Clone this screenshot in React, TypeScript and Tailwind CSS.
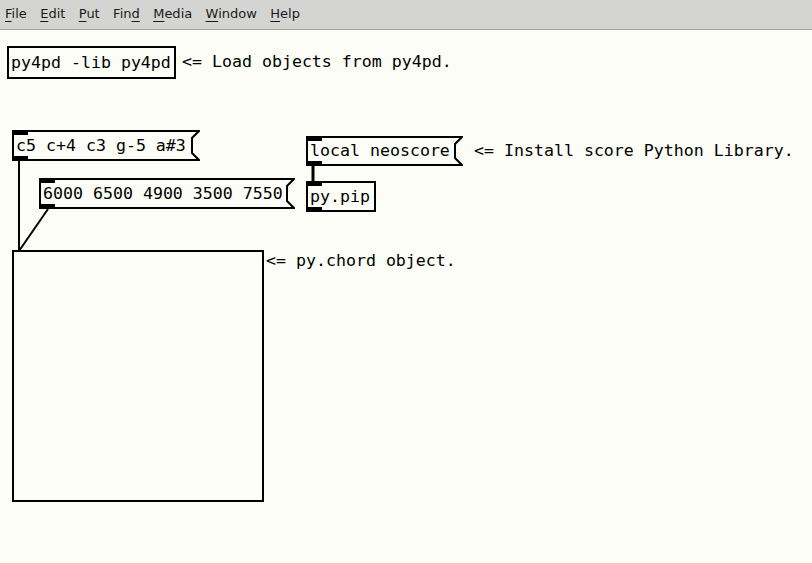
import React from "react";

const mono = { fontFamily: '"DejaVu Sans Mono", "Liberation Mono", monospace' };

function Inlets() {
  return (
    <>
      <div className="absolute left-0 top-0 h-[5px] w-[16px] bg-black" />
      <div className="absolute left-0 bottom-0 h-[5px] w-[16px] bg-black" />
    </>
  );
}

function Msg({ left, top, w, h, text }: { left: number; top: number; w: number; h: number; text: string }) {
  const pts = `1,1 ${w - 1},1 ${w - 8},8 ${w - 8},${h - 8} ${w - 1},${h - 1} 1,${h - 1}`;
  return (
    <div className="absolute" style={{ left, top, width: w, height: h }}>
      <svg className="absolute inset-0" width={w} height={h}>
        <polygon points={pts} fill="none" stroke="black" strokeWidth={2} strokeLinejoin="miter" />
      </svg>
      <Inlets />
      <div
        className="relative flex h-full items-center pl-[4px] pt-[1px] text-[16.6px] leading-none text-black whitespace-pre"
        style={mono}
      >
        {text}
      </div>
    </div>
  );
}

function Obj({ left, top, w, h, text, io = true }: { left: number; top: number; w: number; h: number; text: string; io?: boolean }) {
  return (
    <div
      className="absolute border-2 border-black"
      style={{ left, top, width: w, height: h }}
    >
      {io && (
        <>
          <div className="absolute left-[-2px] top-[-2px] h-[5px] w-[16px] bg-black" />
          <div className="absolute left-[-2px] bottom-[-2px] h-[5px] w-[16px] bg-black" />
        </>
      )}
      <div
        className="flex h-full items-center pl-[2px] pt-[1px] text-[16.6px] leading-none text-black whitespace-pre"
        style={mono}
      >
        {text}
      </div>
    </div>
  );
}

function Comment({ left, top, text }: { left: number; top: number; text: string }) {
  return (
    <div
      className="absolute h-[20px] text-[16.6px] leading-[20px] text-black whitespace-pre"
      style={{ left, top, ...mono }}
    >
      {text}
    </div>
  );
}

const menus: [string, string, string][] = [
  ["", "F", "ile"],
  ["", "E", "dit"],
  ["", "P", "ut"],
  ["Fin", "d", ""],
  ["", "M", "edia"],
  ["", "W", "indow"],
  ["", "H", "elp"],
];

export default function App() {
  return (
    <div className="flex h-[563px] w-[812px] flex-col overflow-hidden bg-[#fdfdf7]">
      <div
        className="flex h-[30px] shrink-0 items-center gap-[13.4px] border-b border-[#a4a49c] bg-[#d4d4d2] pb-[1px] pl-[5px] text-[13px] text-[#1a1a1a]"
        style={{ fontFamily: '"DejaVu Sans", "Noto Sans", sans-serif' }}
      >
        {menus.map(([a, u, b]) => (
          <span key={a + u + b} className="leading-[16px]">
            {a}
            <span className="underline decoration-1 underline-offset-[3px]">{u}</span>
            {b}
          </span>
        ))}
      </div>
      <div className="relative flex-1">
        <svg className="absolute inset-0" width={812} height={533}>
          <line x1={19} y1={131} x2={19} y2={221} stroke="black" strokeWidth={2} />
          <line x1={48} y1={179} x2={19} y2={221} stroke="black" strokeWidth={2} />
          <line x1={313} y1={136} x2={313} y2={152} stroke="black" strokeWidth={3} />
        </svg>

        <Obj left={7} top={16} w={169} h={33} text="py4pd -lib py4pd" io={false} />
        <Comment left={182} top={22} text="<= Load objects from py4pd." />

        <Msg left={12} top={100} w={188} h={31} text="c5 c+4 c3 g-5 a#3" />
        <Msg left={39} top={148} w={256} h={31} text="6000 6500 4900 3500 7550" />

        <Msg left={306} top={106} w={157} h={30} text="local neoscore" />
        <Comment left={474} top={111} text="<= Install score Python Library." />
        <Obj left={306} top={151} w={70} h={31} text="py.pip" />

        <div className="absolute left-[12px] top-[220px] h-[252px] w-[252px] border-2 border-black" />
        <Comment left={266} top={221} text="<= py.chord object." />
      </div>
    </div>
  );
}
